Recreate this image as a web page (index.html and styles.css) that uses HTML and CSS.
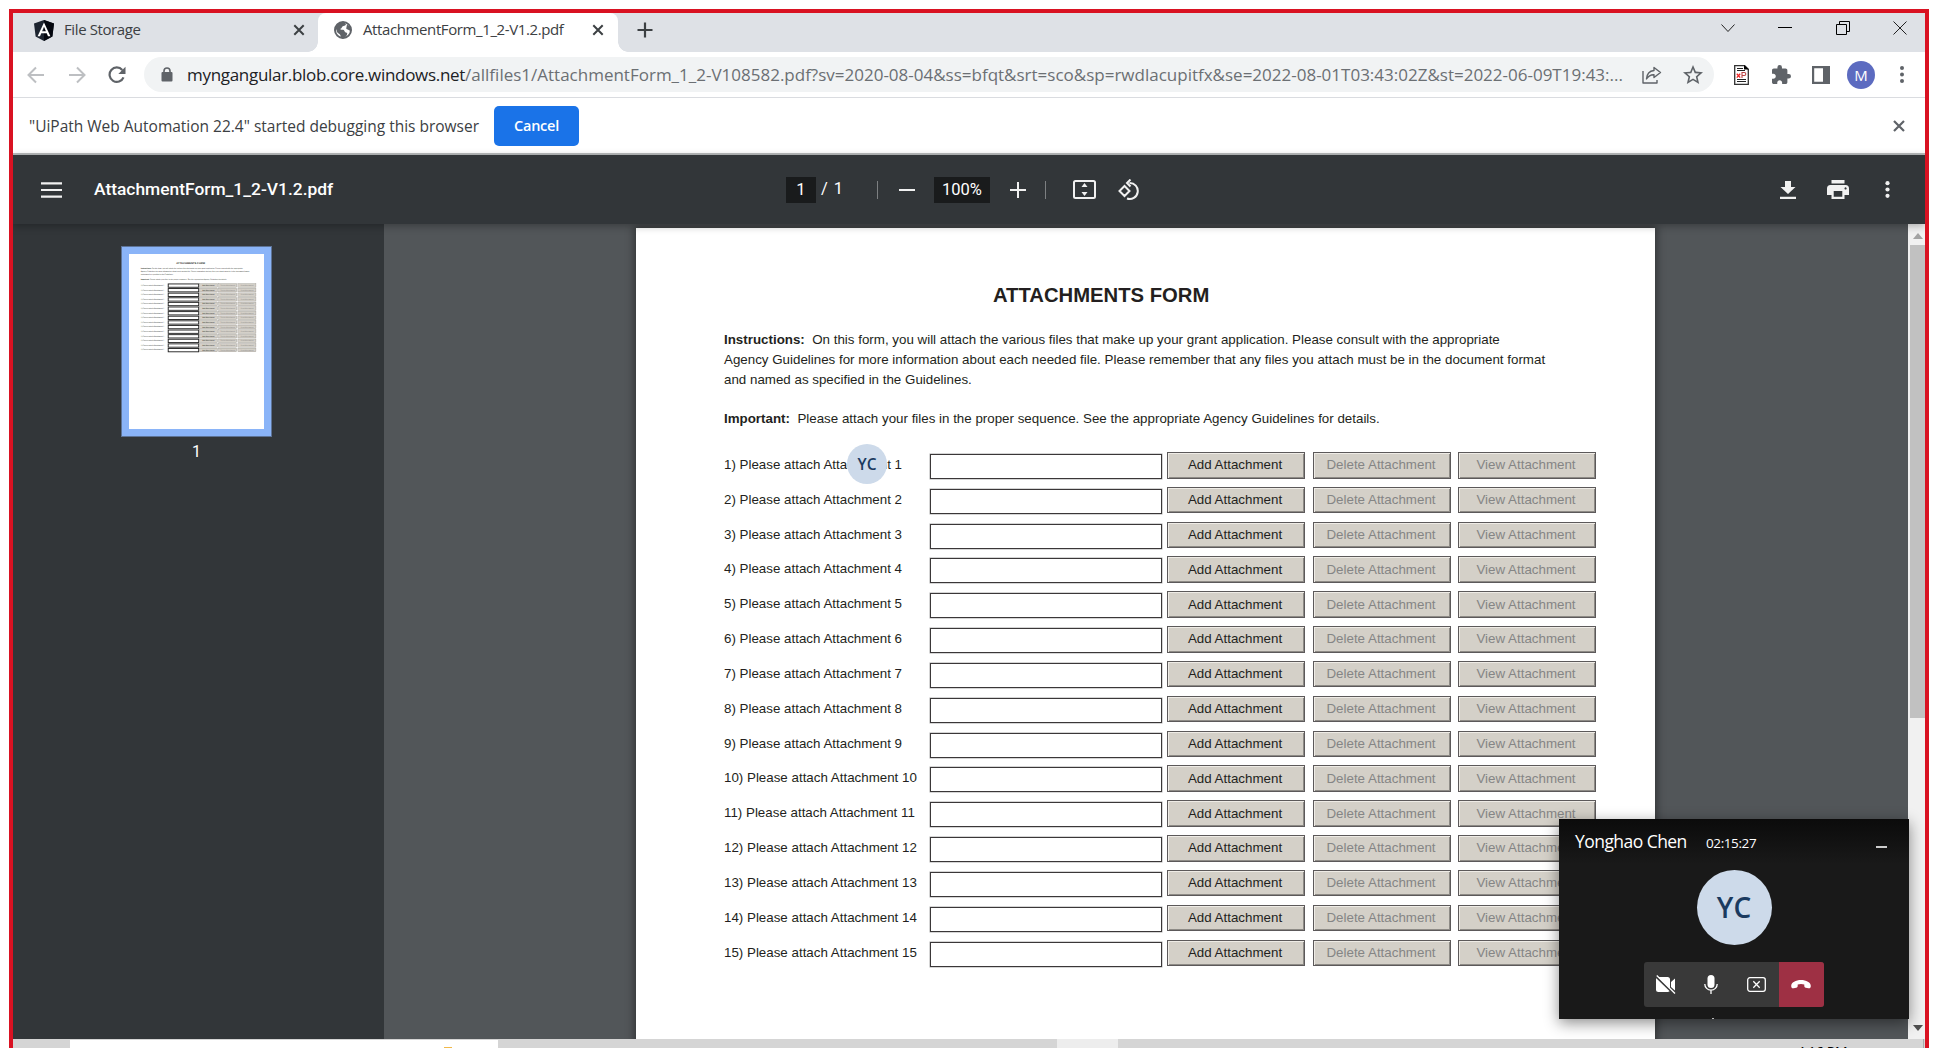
FILE: index.html
```
<!DOCTYPE html>
<html lang="en">
<head>
<meta charset="utf-8">
<title>AttachmentForm_1_2-V1.2.pdf</title>
<link rel="stylesheet" href="styles.css">
</head>
<body>
<div class="frame">
  <header class="tabs">
    <div class="tab">
      <svg class="tab-logo" width="20" height="21" viewBox="0 0 20 21"><path d="M10 0L20 3.6 18.4 16.4 10 21 1.6 16.4 0 3.6z" fill="#1d2430"/><path d="M10 0L20 3.6 18.4 16.4 10 21z" fill="#04070f"/><path d="M10 2.4L3.6 16.3H6L7.3 13.2H12.7L14 16.3H16.4zM10 6.8L11.9 11.3H8.1z" fill="#fff"/></svg>
      <span class="tab-title">File Storage</span>
      <svg class="tab-x" width="12" height="12" viewBox="0 0 12 12"><path d="M1.3 1.3l9.4 9.4M10.7 1.3L1.3 10.7" stroke="#3c4043" stroke-width="2"/></svg>
    </div>
    <div class="tab active">
      <svg class="globe" width="18" height="18" viewBox="0 0 18 18"><circle cx="9" cy="9" r="8" fill="#fff" stroke="#5f6368" stroke-width="2"/><path fill="#5f6368" d="M1 6.500C2.500 2.500 6 .8 10.500 1.200L12 3.200C11.500 4.800 9.500 4.700 8.500 5.500 7.500 6.300 8.200 7.300 6.500 7.800 5.800 8.600 7.500 8.800 9 8.700 10.500 8.800 10.300 10.200 11 11c1 .8 2.500.3 2.200 2-.4 2-2.200 3.700-4.700 4.500L6.500 16.500C6.800 14.500 6.500 13.500 5 12.700 3.300 12 2.800 10.500 2.500 9zM13 3.500l3.500 2.500.8 4-1.800-.5C14.500 8.500 13 8.800 12.200 7.500z"/></svg>
      <span class="tab-title">AttachmentForm_1_2-V1.2.pdf</span>
      <svg class="tab-x" width="12" height="12" viewBox="0 0 12 12"><path d="M1.300 1.300l9.400 9.400M10.700 1.300L1.300 10.700" stroke="#3c4043" stroke-width="2"/></svg>
    </div>
    <svg class="new-tab" width="16" height="16" viewBox="0 0 16 16"><path d="M8 .5v15M.5 8h15" stroke="#3c4043" stroke-width="2.200"/></svg>
    <div class="window-controls">
      <svg width="14" height="14" viewBox="0 0 14 14"><path d="M.5 3.500L7 10.500 13.500 3.500" fill="none" stroke="#222"/></svg>
      <svg width="14" height="14" viewBox="0 0 14 14"><path d="M0 6.500h14" stroke="#000"/></svg>
      <svg width="14" height="14" viewBox="0 0 14 14"><path d="M.5 3.500h10v10H.5zM3.500 3.500V.5h10v10h-3" fill="none" stroke="#000"/></svg>
      <svg width="14" height="14" viewBox="0 0 14 14"><path d="M.5.5l13 13M13.500.5l-13 13" stroke="#222"/></svg>
    </div>
  </header>

  <div class="toolbar">
    <svg class="nav" width="18" height="18" viewBox="0 0 18 18"><path d="M17 9H2M9 1.500L1.500 9 9 16.500" fill="none" stroke="#bdbfc2" stroke-width="2"/></svg>
    <svg class="nav" width="18" height="18" viewBox="0 0 18 18"><path d="M1 9h15M9 1.500L16.500 9 9 16.500" fill="none" stroke="#bdbfc2" stroke-width="2"/></svg>
    <svg class="nav" width="18" height="18" viewBox="0 0 18 18"><path d="M15.500 11.300A7.200 7.200 0 1 1 14.300 4" fill="none" stroke="#5f6368" stroke-width="2.200"/><path d="M17.500.8V8h-7.200z" fill="#5f6368"/></svg>
    <div class="omnibox">
      <svg width="12" height="15" viewBox="0 0 12 15"><path d="M3 7V4a3 3 0 0 1 6 0v3" fill="none" stroke="#5f6368" stroke-width="1.600"/><rect x=".5" y="5" width="11" height="9.500" rx="1" fill="#5f6368"/></svg>
      <span class="url"><span class="host">myngangular.blob.core.windows.net</span>/allfiles1/AttachmentForm_1_2-V108582.pdf?sv=2020-08-04&amp;ss=bfqt&amp;srt=sco&amp;sp=rwdlacupitfx&amp;se=2022-08-01T03:43:02Z&amp;st=2022-06-09T19:43:...</span>
      <svg class="share" width="20" height="18" viewBox="0 0 20 18"><path d="M1 5v12h14v-3M12 1.500l6.500 5-6.500 5V8.700C8.500 8.500 6.500 9.800 4.500 13 4.800 8.500 7.200 5 12 4.500z" fill="none" stroke="#5f6368" stroke-width="1.400" stroke-linejoin="round"/></svg>
      <svg class="star" width="20" height="19" viewBox="2 2 20 19"><path fill="#5f6368" d="M22 9.240l-7.190-.62L12 2 9.190 8.630 2 9.240l5.460 4.730L5.820 21 12 17.270 18.180 21l-1.630-7.030L22 9.240zM12 15.400l-3.760 2.270 1-4.280-3.320-2.880 4.380-.38L12 6.100l1.710 4.040 4.380.38-3.320 2.880 1 4.280L12 15.400z"/></svg>
    </div>
    <svg class="ext" width="15" height="20" viewBox="0 0 15 20"><path d="M.7.700h10l3.600 3.600v15H.7z" fill="#fff" stroke="#333" stroke-width="1.300"/><path d="M10 0l5 4.500h-5z" fill="#000"/><path d="M3 3.500h6M3 5.500h8M3 14.500h9M3 16.500h9" stroke="#222"/><path d="M2.800 8.800l3.400 3.800M6.200 8.800l-3.400 3.800" stroke="#e22" stroke-width="1.300"/><path d="M8 13V7.500h2.300a1.500 1.500 0 0 1 0 3H8" fill="none" stroke="#b44" stroke-width="1.100"/></svg>
    <svg class="puzzle" width="19" height="19" viewBox="2 1 21 21"><path fill="#5f6368" d="M20.500 11H19V7c0-1.100-.9-2-2-2h-4V3.500a2.500 2.500 0 0 0-5 0V5H4c-1.100 0-1.990.9-1.990 2v3.800H3.500c1.490 0 2.700 1.210 2.700 2.700s-1.210 2.700-2.700 2.700H2V20c0 1.100.9 2 2 2h3.800v-1.500c0-1.490 1.210-2.700 2.700-2.700s2.700 1.210 2.700 2.700V22H17c1.100 0 2-.9 2-2v-4h1.500a2.500 2.500 0 0 0 0-5z"/></svg>
    <svg class="panel" width="18" height="18" viewBox="0 0 18 18"><path d="M0 0h18v18H0zM2.200 2.200v13.600H11V2.200z" fill="#5f6368" fill-rule="evenodd"/></svg>
    <span class="profile">M</span>
    <svg class="menu" width="4" height="17" viewBox="0 0 4 17"><g fill="#5f6368"><circle cx="2" cy="2" r="2"/><circle cx="2" cy="8.500" r="2"/><circle cx="2" cy="15" r="2"/></g></svg>
  </div>

  <div class="infobar">
    <span class="info-text">"UiPath Web Automation 22.4" started debugging this browser</span>
    <button class="cancel">Cancel</button>
    <svg width="12" height="12" viewBox="0 0 12 12"><path d="M1 1l10 10M11 1L1 11" stroke="#5f6368" stroke-width="2.200"/></svg>
  </div>

  <div class="pdf-bar">
    <svg class="burger" width="21" height="16" viewBox="0 0 21 16"><path d="M0 1.300h21M0 8h21M0 14.700h21" stroke="#f1f1f1" stroke-width="2.200"/></svg>
    <span class="doc-name">AttachmentForm_1_2-V1.2.pdf</span>
    <div class="pdf-tools">
      <span class="field page-no">1</span><span class="page-total"><span>/</span><span>1</span></span>
      <i class="rule"></i>
      <svg class="minus" width="16" height="16" viewBox="0 0 16 16"><path d="M0 8h16" stroke="#f1f1f1" stroke-width="2"/></svg>
      <span class="field zoom">100%</span>
      <svg class="plus" width="16" height="16" viewBox="0 0 16 16"><path d="M0 8h16M8 0v16" stroke="#f1f1f1" stroke-width="2"/></svg>
      <i class="rule"></i>
      <svg class="fit" width="23" height="19" viewBox="0 0 23 19"><rect x="1" y="1" width="21" height="17" rx="1.500" fill="none" stroke="#f1f1f1" stroke-width="2"/><path d="M11.500 3l3 4h-6zM11.500 16l3-4h-6z" fill="#f1f1f1"/></svg>
      <svg class="rotate" width="22" height="22" viewBox="0 0 22 22"><path d="M6.500 7L1.500 12l5 5 5-5zM11.500 4A8 8 0 1 1 9 19.500M12.500.5L9 4l3.500 3.500" fill="none" stroke="#f1f1f1" stroke-width="2"/></svg>
    </div>
    <div class="pdf-actions">
      <svg width="16" height="18" viewBox="0 0 16 18"><path d="M5 0h6v6h4.500L8 13 .5 6H5zM0 15.700h16V18H0z" fill="#f1f1f1"/></svg>
      <svg width="22" height="19" viewBox="0 0 22 19"><path d="M4.500 0h13v3.500h-13zM3.500 5h15A3.500 3.500 0 0 1 22 8.500V15h-4.500v4h-13v-4H0V8.500A3.500 3.500 0 0 1 3.500 5zM6.700 11v5.800h8.600V11zM18.500 7.300a1.100 1.100 0 1 0 .1 0z" fill="#f1f1f1" fill-rule="evenodd"/></svg>
      <svg width="5" height="17" viewBox="0 0 5 17"><g fill="#f1f1f1"><circle cx="2.500" cy="2.200" r="2.100"/><circle cx="2.500" cy="8.500" r="2.100"/><circle cx="2.500" cy="14.800" r="2.100"/></g></svg>
    </div>
  </div>

  <main class="viewer">
    <aside class="sidebar">
      <div class="thumb">
        <svg width="135" height="175" viewBox="0 0 1019 1321" font-family="'Liberation Sans', sans-serif" font-size="13.340" fill="#231f20" text-rendering="geometricPrecision">
          <defs>
            <g id="line"><text x="88" y="17">1) Please attach Attachment 1</text><rect x="296" y="2" width="230" height="25" fill="#fff" stroke="#222" stroke-width="7"/><g fill="#d4d0c8" stroke="#9a9690" stroke-width="3"><rect x="532" y="0" width="136" height="27"/><rect x="677" y="0" width="136" height="27"/><rect x="822" y="0" width="136" height="27"/></g><text x="552" y="18">Add Attachment</text><g fill="#858585"><text x="691" y="18">Delete Attachment</text><text x="841" y="18">View Attachment</text></g></g>
          </defs>
          <rect width="1019" height="1321" fill="#fff"/>
          <text x="357" y="74" font-size="20.220" font-weight="bold">ATTACHMENTS FORM</text>
          <text x="88" y="115"><tspan font-weight="bold">Instructions:</tspan> On this form, you will attach the various files that make up your grant application. Please consult with the appropriate</text>
          <text x="88" y="136">Agency Guidelines for more information about each needed file. Please remember that any files you attach must be in the document format</text>
          <text x="88" y="156">and named as specified in the Guidelines.</text>
          <text x="88" y="195"><tspan font-weight="bold">Important:</tspan> Please attach your files in the proper sequence. See the appropriate Agency Guidelines for details.</text>
          <use href="#line" y="224"/><use href="#line" y="258.800"/><use href="#line" y="293.600"/><use href="#line" y="328.400"/><use href="#line" y="363.200"/><use href="#line" y="398"/><use href="#line" y="432.800"/><use href="#line" y="467.600"/><use href="#line" y="502.400"/><use href="#line" y="537.200"/><use href="#line" y="572"/><use href="#line" y="606.800"/><use href="#line" y="641.600"/><use href="#line" y="676.400"/><use href="#line" y="711.200"/>
        </svg>
      </div>
      <span class="thumb-no">1</span>
    </aside>
    <section class="canvas">
      <article class="page">
        <h1>ATTACHMENTS FORM</h1>
        <p><b>Instructions:</b>&nbsp; On this form, you will attach the various files that make up your grant application. Please consult with the appropriate<br>Agency Guidelines for more information about each needed file. Please remember that any files you attach must be in the document format<br>and named as specified in the Guidelines.</p>
        <p class="important"><b>Important:</b>&nbsp; Please attach your files in the proper sequence. See the appropriate Agency Guidelines for details.</p>
        <div class="rows">
          <div class="row"><label>1) Please attach Attachment 1</label><span class="box"></span><button>Add Attachment</button><button disabled>Delete Attachment</button><button disabled>View Attachment</button></div>
          <div class="row"><label>2) Please attach Attachment 2</label><span class="box"></span><button>Add Attachment</button><button disabled>Delete Attachment</button><button disabled>View Attachment</button></div>
          <div class="row"><label>3) Please attach Attachment 3</label><span class="box"></span><button>Add Attachment</button><button disabled>Delete Attachment</button><button disabled>View Attachment</button></div>
          <div class="row"><label>4) Please attach Attachment 4</label><span class="box"></span><button>Add Attachment</button><button disabled>Delete Attachment</button><button disabled>View Attachment</button></div>
          <div class="row"><label>5) Please attach Attachment 5</label><span class="box"></span><button>Add Attachment</button><button disabled>Delete Attachment</button><button disabled>View Attachment</button></div>
          <div class="row"><label>6) Please attach Attachment 6</label><span class="box"></span><button>Add Attachment</button><button disabled>Delete Attachment</button><button disabled>View Attachment</button></div>
          <div class="row"><label>7) Please attach Attachment 7</label><span class="box"></span><button>Add Attachment</button><button disabled>Delete Attachment</button><button disabled>View Attachment</button></div>
          <div class="row"><label>8) Please attach Attachment 8</label><span class="box"></span><button>Add Attachment</button><button disabled>Delete Attachment</button><button disabled>View Attachment</button></div>
          <div class="row"><label>9) Please attach Attachment 9</label><span class="box"></span><button>Add Attachment</button><button disabled>Delete Attachment</button><button disabled>View Attachment</button></div>
          <div class="row"><label>10) Please attach Attachment 10</label><span class="box"></span><button>Add Attachment</button><button disabled>Delete Attachment</button><button disabled>View Attachment</button></div>
          <div class="row"><label>11) Please attach Attachment 11</label><span class="box"></span><button>Add Attachment</button><button disabled>Delete Attachment</button><button disabled>View Attachment</button></div>
          <div class="row"><label>12) Please attach Attachment 12</label><span class="box"></span><button>Add Attachment</button><button disabled>Delete Attachment</button><button disabled>View Attachment</button></div>
          <div class="row"><label>13) Please attach Attachment 13</label><span class="box"></span><button>Add Attachment</button><button disabled>Delete Attachment</button><button disabled>View Attachment</button></div>
          <div class="row"><label>14) Please attach Attachment 14</label><span class="box"></span><button>Add Attachment</button><button disabled>Delete Attachment</button><button disabled>View Attachment</button></div>
          <div class="row"><label>15) Please attach Attachment 15</label><span class="box"></span><button>Add Attachment</button><button disabled>Delete Attachment</button><button disabled>View Attachment</button></div>
        </div>
      </article>
    </section>
    <div class="scrollbar">
      <svg width="10" height="6" viewBox="0 0 10 6"><path d="M0 6L5 0l5 6z" fill="#a3a3a3"/></svg>
      <span class="grip"></span>
      <svg width="10" height="6" viewBox="0 0 10 6"><path d="M0 0h10L5 6z" fill="#505050"/></svg>
    </div>
  </main>

  <footer class="taskbar">
    <span class="search"><i></i></span>
    <span class="task"></span>
    <span class="clock">4:16 PM</span>
  </footer>
</div>

<span class="cursor-badge">YC</span>

<section class="call">
  <div class="call-head"><span class="caller">Yonghao Chen</span><span class="timer">02:15:27</span><i></i></div>
  <span class="avatar">YC</span>
  <div class="controls">
    <span><svg width="20" height="19" viewBox="0 0 20 19"><path d="M2 2h9.500A2.500 2.500 0 0 1 14 4.500v10a2.500 2.500 0 0 1-2.500 2.500H2.500A2.500 2.500 0 0 1 0 14.500V4A2 2 0 0 1 2 2zM15 7l4-3.500V15.500L15 12z" fill="#fff"/><path d="M0 1.500L18 19" stroke="#393939" stroke-width="2"/><path d="M.8.500L19 18.500" stroke="#fff" stroke-width="1.300"/></svg></span>
    <span><svg width="14" height="19" viewBox="0 0 14 19"><rect x="3.500" y="0" width="7" height="13" rx="3.500" fill="#fff"/><path d="M.8 9a6.200 6.200 0 0 0 12.400 0M7 15.300V19" fill="none" stroke="#fff" stroke-width="1.300"/></svg></span>
    <span><svg width="19" height="15" viewBox="0 0 19 15"><rect x=".7" y=".7" width="17.600" height="13.600" rx="2.200" fill="none" stroke="#fff" stroke-width="1.300"/><path d="M6.300 4.300l6.400 6.400M12.700 4.300l-6.400 6.400" stroke="#fff" stroke-width="1.300"/></svg></span>
    <span class="hangup"><svg width="20" height="9" viewBox="0 0 20 9"><path d="M10 0C15 0 20 2.500 19.800 6c-.1 2-.9 2.600-2.500 2.300l-2.500-.5c-1.200-.3-1.500-.8-1.500-2V4.600C11.500 3.900 8.500 3.900 6.700 4.600v1.200c0 1.200-.3 1.700-1.500 2l-2.500.5C1.100 8.600.3 8 .2 6 0 2.500 5 0 10 0z" fill="#fff"/></svg></span>
  </div>
  <i class="mark"></i>
</section>
</body>
</html>
```
FILE: styles.css
```
* { box-sizing: border-box; }
body { margin: 0; width: 1938px; height: 1048px; overflow: hidden; background: #fff; font-family: "Open Sans", "Noto Sans", sans-serif; }
svg { display: block; flex: none; }
.frame { margin: 9px 0 0 9px; width: 1920px; height: 1039px; border: 4px solid #d91222; border-bottom: 0; display: flex; flex-direction: column; overflow: hidden; }

/* tab strip */
.tabs { height: 39px; flex: none; background: #dee1e6; display: flex; }
.tab { width: 305px; display: flex; align-items: center; padding: 0 13px 5px 21px; font-size: 15px; letter-spacing: -.39px; color: #3c4043; line-height: 20px; white-space: nowrap; border-bottom-right-radius: 10px; }
.tab .tab-title { margin-left: 10px; position: relative; top: -1px; }
.tab-x { margin-left: auto; }
.tab.active { width: 300px; background: #fff; border-radius: 8px 8px 0 0; padding: 0 14px 5px 16px; position: relative; }
.tab.active .tab-title { margin-left: 11px; }
.tab.active::before, .tab.active::after { content: ""; position: absolute; bottom: 0; width: 10px; height: 10px; }
.tab.active::before { left: -10px; background: radial-gradient(circle at 0 0, transparent 9.500px, #fff 10px); }
.tab.active::after { right: -10px; background: radial-gradient(circle at 100% 0, transparent 9.500px, #fff 10px); }
.new-tab { margin: 9px 0 0 19px; }
.window-controls { margin: 8px 18px 0 auto; display: flex; gap: 43.500px; }

/* address bar */
.toolbar { height: 46px; flex: none; border-bottom: 1px solid #dadce0; display: flex; align-items: center; padding: 0 21.500px 0 14px; }
.nav { margin-right: 23px; }
.nav:nth-child(3) { margin-left: -1px; margin-right: 18px; }
.omnibox { width: 1570px; height: 35px; border-radius: 18px; background: #f1f3f4; display: flex; align-items: center; padding: 0 11px 0 17px; white-space: nowrap; color: #6b6f73; font-size: 17px; }
.url { width: 1440px; margin-left: 14px; line-height: 24px; }
.host { color: #202124; letter-spacing: -.3px; }
.share { margin-left: 15px; }
.star { margin-left: auto; }
.ext { margin-left: 20px; }
.puzzle { margin-left: 23px; }
.panel { margin-left: 21px; }
.profile { width: 28px; height: 28px; margin-left: 17px; border-radius: 50%; background: #5c6bc0; color: #fff; font-size: 15px; line-height: 28px; text-align: center; }
.menu { margin-left: auto; }

/* debugging notice */
.infobar { height: 57px; flex: none; border-bottom: 2px solid #b9bcbd; display: flex; align-items: center; padding: 0 20px 0 16px; color: #3c4043; font-size: 15.500px; }
.info-text { width: 465px; letter-spacing: -.01px; white-space: nowrap; }
.cancel { width: 85px; height: 40px; border: 0; border-radius: 5px; padding: 0; background: #1a73e8; color: #fff; font: 600 14.500px "Open Sans", sans-serif; letter-spacing: -.25px; }
.infobar svg { margin-left: auto; }

/* PDF toolbar */
.pdf-bar { height: 69px; flex: none; background: #323639; box-shadow: 0 2px 8px rgba(0, 0, 0, .3); position: relative; z-index: 1; display: flex; align-items: center; padding: 0 35px 0 28px; color: #fff; font-family: Roboto, sans-serif; font-size: 16.500px; }
.doc-name { margin-left: 32px; padding-bottom: 2px; width: 692px; font-size: 17.400px; font-weight: 500; white-space: nowrap; }
.pdf-tools { display: flex; align-items: center; }
.field { height: 26px; background: #191b1c; line-height: 25px; text-align: center; }
.page-no { width: 30px; }
.page-total { width: 35px; padding: 0 8px 2px 5px; display: flex; justify-content: space-between; }
.rule { width: 1px; height: 18px; background: #7d8082; }
.page-total + .rule { margin-left: 26px; }
.minus { margin-left: 21px; }
.zoom { width: 56px; margin-left: 19px; }
.plus { margin-left: 20px; }
.plus + .rule { margin-left: 19px; }
.fit { margin-left: 27px; }
.rotate { margin-left: 22px; }
.pdf-actions { margin-left: auto; display: flex; align-items: center; gap: 0 31px; }
.pdf-actions svg:last-child { margin-left: 5px; }

/* document area */
.viewer { height: 815px; flex: none; display: flex; overflow: hidden; }
.sidebar { width: 371px; background: #323639; display: flex; flex-direction: column; align-items: center; padding: 22px 4px 0 0; }
.thumb { width: 151px; height: 191px; padding: 8px; background: #8ab4f8; outline: 1px solid #5d7396; outline-offset: -1px; }
.thumb-no { margin-top: 5px; color: #fff; font: 16px/20px Roboto, sans-serif; }
.canvas { width: 1524px; background: #525659; padding: 4px 0 0 252px; overflow: hidden; }
.page { width: 1019px; height: 1321px; background: #fff; box-shadow: 0 0 8px 2px rgba(0, 0, 0, .4); padding: 1px 0 0 88px; color: #231f20; font: 13.355px/20px "Liberation Sans", Arial, sans-serif; white-space: nowrap; }
h1 { margin: 53px 0 0 269px; font-size: 20.260px; line-height: 26px; font-weight: bold; }
p { margin: 22px 0 0; }
p.important { margin-top: 19px; }
.rows { margin-top: 23px; }
.row { height: 34.830px; display: grid; grid-template-columns: 206px 232px 138px 138px 138px; align-items: start; }
.row label { padding-top: 5px; line-height: 16px; }
.box { height: 25px; margin-top: 2px; border: 1px solid #3a3738; box-shadow: 0 0 0 .5px #aaa; }
.row button { width: 138px; height: 26.500px; margin-left: 5px; padding: 0 2px 0 0; background: #d4d0c8; border: 1px solid #5c595a; box-shadow: inset 1px 1px #efece6, inset -1px -1px #8e8b86; color: #231f20; font: 13.355px/16px "Liberation Sans", Arial, sans-serif; }
.row button:nth-child(4) { margin-left: 13px; }
.row button:nth-child(5) { margin-left: 20px; }
.row button:disabled { color: #858585; }
.scrollbar { flex: 1; background: #f1f1f1; display: flex; flex-direction: column; align-items: center; padding: 9px 0 8px 2px; }
.grip { align-self: stretch; height: 473px; margin: 6px 0 auto; background: #c1c1c1; }

/* desktop taskbar */
.taskbar { height: 9px; flex: none; background: #d5d5d5; display: flex; overflow: hidden; }
.search { width: 428px; margin: 1px 0 0 57px; background: #fff; }
.search i { display: block; width: 8px; height: 1px; margin: 7px 0 0 374px; background: #f1b94b; }
.task { width: 61px; margin-left: 559px; background: #ededed; }
.clock { margin-left: 679px; padding-top: 4px; width: 127px; border-right: 1px solid #aaa; font-size: 14px; line-height: 18px; letter-spacing: -.3px; color: #000; white-space: nowrap; }

/* collaborator marker and call window float over everything */
.cursor-badge, .avatar { border-radius: 50%; background: #cddaea; color: #1b3a5f; font-weight: 600; text-align: center; }
.cursor-badge { position: absolute; left: 847px; top: 444px; width: 40px; height: 40px; font-size: 15.500px; line-height: 41px; z-index: 2; }
.call { position: absolute; left: 1559px; top: 819px; width: 350px; height: 200px; z-index: 3; background: linear-gradient(#0b0b0b, #191919 45px); box-shadow: 0 4px 14px rgba(0, 0, 0, .45); color: #fff; display: flex; flex-direction: column; align-items: center; }
.call-head { align-self: stretch; height: 51px; padding: 9px 22px 0 16px; display: flex; align-items: baseline; line-height: 26px; }
.caller { width: 131px; font-size: 17.500px; letter-spacing: -.55px; white-space: nowrap; }
.timer { font-size: 13.500px; letter-spacing: -.4px; }
.call-head i { width: 11px; height: 2px; margin-left: auto; background: #ccc; }
.avatar { width: 75px; height: 75px; font-size: 28px; line-height: 75px; }
.controls { margin: 17px 0 0 -1px; display: flex; background: #393939; border-radius: 3px; overflow: hidden; }
.controls span { width: 45px; height: 45px; display: grid; place-items: center; }
.controls .hangup { background: #9e3044; }
.mark { width: 2px; height: 1px; margin: 11px 42px 0 0; background: #bbb; }
```
